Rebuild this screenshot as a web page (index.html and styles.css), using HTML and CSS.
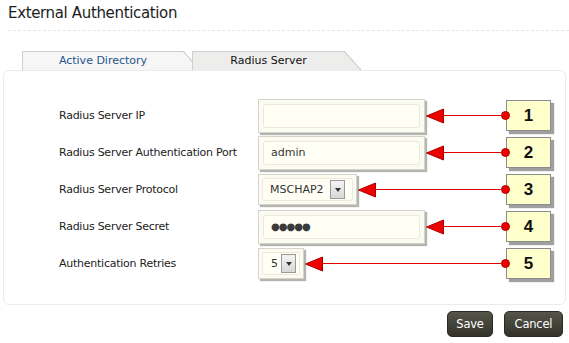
FILE: index.html
```html
<!DOCTYPE html>
<html lang="en">
<head>
  <meta charset="UTF-8" />
  <title>External Authentication</title>
  <link rel="stylesheet" href="styles.css">
</head>
<body>
  <div class="page">
    <h1 class="title">External Authentication</h1>

    <div class="tabs">
      <div class="tab tab-inactive">Active Directory</div>
      <div class="tab tab-active">Radius Server</div>
    </div>

    <div class="panel">
      <div class="form">
        <div class="row">
          <label class="label">Radius Server IP</label>
          <div class="field field-text"><div class="inner"></div></div>
          <div class="pointer"><svg class="head" width="18" height="16" viewBox="0 0 18 16"><polygon points="0.5,8 17.5,1 17.5,15" /></svg><span class="line"></span><span class="dot"></span></div>
          <div class="callout">1</div>
        </div>
        <div class="row">
          <label class="label">Radius Server Authentication Port</label>
          <div class="field field-text"><div class="inner">admin</div></div>
          <div class="pointer"><svg class="head" width="18" height="16" viewBox="0 0 18 16"><polygon points="0.5,8 17.5,1 17.5,15" /></svg><span class="line"></span><span class="dot"></span></div>
          <div class="callout">2</div>
        </div>
        <div class="row">
          <label class="label">Radius Server Protocol</label>
          <div class="field field-select select-wide"><div class="inner"><span class="value">MSCHAP2</span><span class="drop"></span></div></div>
          <div class="pointer"><svg class="head" width="18" height="16" viewBox="0 0 18 16"><polygon points="0.5,8 17.5,1 17.5,15" /></svg><span class="line"></span><span class="dot"></span></div>
          <div class="callout">3</div>
        </div>
        <div class="row">
          <label class="label">Radius Server Secret</label>
          <div class="field field-text"><div class="inner secret">●●●●●</div></div>
          <div class="pointer"><svg class="head" width="18" height="16" viewBox="0 0 18 16"><polygon points="0.5,8 17.5,1 17.5,15" /></svg><span class="line"></span><span class="dot"></span></div>
          <div class="callout">4</div>
        </div>
        <div class="row">
          <label class="label">Authentication Retries</label>
          <div class="field field-select select-narrow"><div class="inner"><span class="value">5</span><span class="drop"></span></div></div>
          <div class="pointer"><svg class="head" width="18" height="16" viewBox="0 0 18 16"><polygon points="0.5,8 17.5,1 17.5,15" /></svg><span class="line"></span><span class="dot"></span></div>
          <div class="callout">5</div>
        </div>
      </div>
    </div>

    <div class="actions">
      <button class="btn btn-save">Save</button>
      <button class="btn btn-cancel">Cancel</button>
    </div>
  </div>
</body>
</html>
```

FILE: styles.css
```css
body {
  margin: 0;
  background: #fff;
  font-family: 'DejaVu Sans', Verdana, sans-serif;
  color: #222;
}

.page {
  width: 569px;
}

.title {
  margin: 0 0 0 8px;
  padding: 4px 0 7px;
  font-size: 15px;
  font-weight: normal;
  line-height: 19px;
  letter-spacing: -0.35px;
  color: #1c1c1c;
  border-bottom: 1px dashed #e6e6e6;
}

/* tabs */
.tabs {
  display: flex;
  margin: 20px 0 0 22px;
  height: 19px;
}

.tab {
  position: relative;
  height: 18px;
  line-height: 18px;
  font-size: 11px;
  text-align: center;
  border-top: 1px solid #cfcfcf;
  border-left: 1px solid #cfcfcf;
}

.tab::after {
  content: "";
  position: absolute;
  top: -1px;
  right: -17px;
  width: 17px;
  height: 19px;
}

.tab-inactive {
  width: 160px;
  background: #f6f6f6;
  color: #23558c;
}

.tab-inactive::after {
  background: linear-gradient(to top right, #f6f6f6 calc(50% - 1px), #c8c8c8 50%, transparent calc(50% + 1px));
}

.tab-active {
  width: 151px;
  margin-left: 9px;
  background: #ededeb;
  color: #111;
  z-index: 1;
}

.tab-active::after {
  background: linear-gradient(to top right, #ededeb calc(50% - 1px), #c8c8c8 50%, transparent calc(50% + 1px));
}

/* panel */
.panel {
  margin: 0 3px 0 3px;
  border: 1px solid #ebebeb;
  border-radius: 6px;
  padding: 26px 14px 22px 55px;
}

.row {
  display: flex;
  align-items: center;
  height: 37px;
}

.label {
  width: 199px;
  flex: none;
  font-size: 11px;
  letter-spacing: -0.25px;
}

.field {
  flex: none;
  box-sizing: border-box;
  background: #fbfbf1;
  border: 1px solid #d4d4cc;
  box-shadow: 2px 2px 1px #b5b5b0;
  padding: 4px;
}

.field-text {
  width: 167px;
  height: 34px;
}

.inner {
  box-sizing: border-box;
  height: 100%;
  display: flex;
  align-items: center;
  padding-left: 7px;
  background: #fffff6;
  border: 1px solid #ece9da;
  border-radius: 3px;
  font-size: 11px;
  color: #333;
}

.secret {
  font-size: 10px;
  letter-spacing: -1px;
  color: #3a3a3a;
}

.field-select {
  height: 31px;
  padding: 3px;
}

.select-wide {
  width: 99px;
}

.select-narrow {
  width: 46px;
}

.select-wide .inner {
  padding-left: 7px;
}

.select-narrow .inner {
  padding-left: 8px;
}

.value {
  flex: 1;
}

.drop {
  box-sizing: border-box;
  width: 15px;
  height: 19px;
  margin-right: 7px;
  border: 1px solid #9a9a9a;
  background: linear-gradient(#f4f4f4, #d8d8d8);
  display: flex;
  align-items: center;
  justify-content: center;
}

.select-narrow .drop {
  margin-right: 3px;
}

.drop::before {
  content: "";
  border-left: 3px solid transparent;
  border-right: 3px solid transparent;
  border-top: 4px solid #333;
}

/* annotation pointers */
.pointer {
  flex: 1;
  display: flex;
  align-items: center;
  margin-left: 1px;
}

.head {
  flex: none;
  fill: #ee0000;
  stroke: #a80000;
  stroke-width: 1;
}

.line {
  flex: 1;
  height: 1px;
  background: #e00000;
}

.dot {
  position: relative;
  z-index: 1;
  flex: none;
  box-sizing: border-box;
  width: 9px;
  height: 9px;
  margin-right: -4px;
  border-radius: 50%;
  background: #ee0000;
  border: 1px solid #b00000;
}

.callout {
  flex: none;
  box-sizing: border-box;
  width: 45px;
  height: 31px;
  background: #ffffcc;
  border: 1px solid #8c8c8c;
  box-shadow: 3px 3px 1px #a0a0a0;
  font-family: 'Liberation Sans', Arial, sans-serif;
  font-weight: bold;
  font-size: 17px;
  line-height: 29px;
  text-align: center;
  color: #111;
}

/* buttons */
.actions {
  display: flex;
  justify-content: flex-end;
  gap: 11px;
  padding: 6px 6px 0 0;
}

.btn {
  height: 26px;
  padding: 0;
  border: 1px solid #2a2a22;
  border-radius: 5px;
  background: linear-gradient(#55554a, #33332a);
  color: #fff;
  font-family: 'DejaVu Sans', Verdana, sans-serif;
  font-size: 11.5px;
  letter-spacing: -0.2px;
}

.btn-save {
  width: 46px;
}

.btn-cancel {
  width: 59px;
}
```
